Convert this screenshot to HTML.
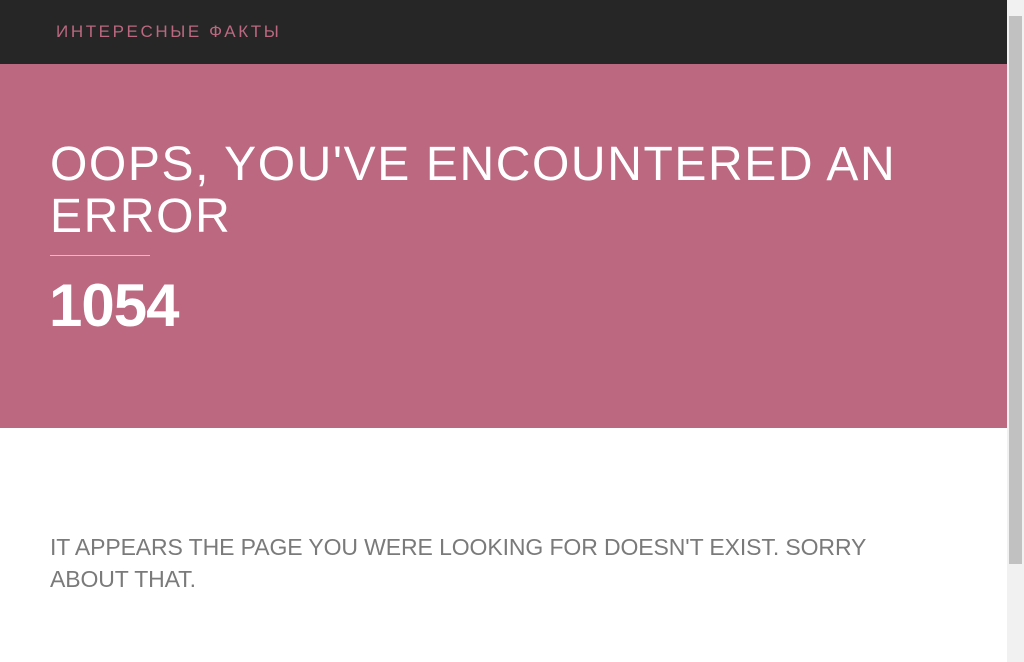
<!DOCTYPE html>
<html><head><meta charset="utf-8"><style>
body{margin:0;width:1024px;height:662px;overflow:hidden;font-family:"Liberation Sans",sans-serif;background:#fff;position:relative}
.hdr{position:absolute;left:0;top:0;width:1007px;height:64px;background:#262626}
.brand{position:absolute;left:56px;top:22px;color:#bb6880;font-size:17px;letter-spacing:2.6px}
.hero{position:absolute;left:0;top:64px;width:1007px;height:364px;background:#bb6880;color:#fff}
h1{position:absolute;left:50px;top:75px;margin:0;font-weight:normal;font-size:48px;line-height:52px;width:950px;letter-spacing:1.6px}
.line{position:absolute;left:50px;top:191px;width:100px;height:1px;background:#e8b8c6}
.code{position:absolute;left:49px;top:207px;font-size:60px;font-weight:bold;letter-spacing:-1px}
p{position:absolute;left:50px;top:531px;margin:0;width:860px;font-size:23px;line-height:32px;color:#7a7a7a;letter-spacing:-0.1px}
.sb{position:absolute;left:1007px;top:0;width:17px;height:662px;background:#f1f1f1}
.th{position:absolute;left:1009px;top:16px;width:13px;height:548px;background:#c1c1c1}
</style></head><body>
<div class="hdr"><div class="brand">ИНТЕРЕСНЫЕ ФАКТЫ</div></div>
<div class="hero"><h1>OOPS, YOU'VE ENCOUNTERED AN ERROR</h1><div class="line"></div><div class="code">1054</div></div>
<p>IT APPEARS THE PAGE YOU WERE LOOKING FOR DOESN'T EXIST. SORRY ABOUT THAT.</p>
<div class="sb"></div><div class="th"></div>
</body></html>
